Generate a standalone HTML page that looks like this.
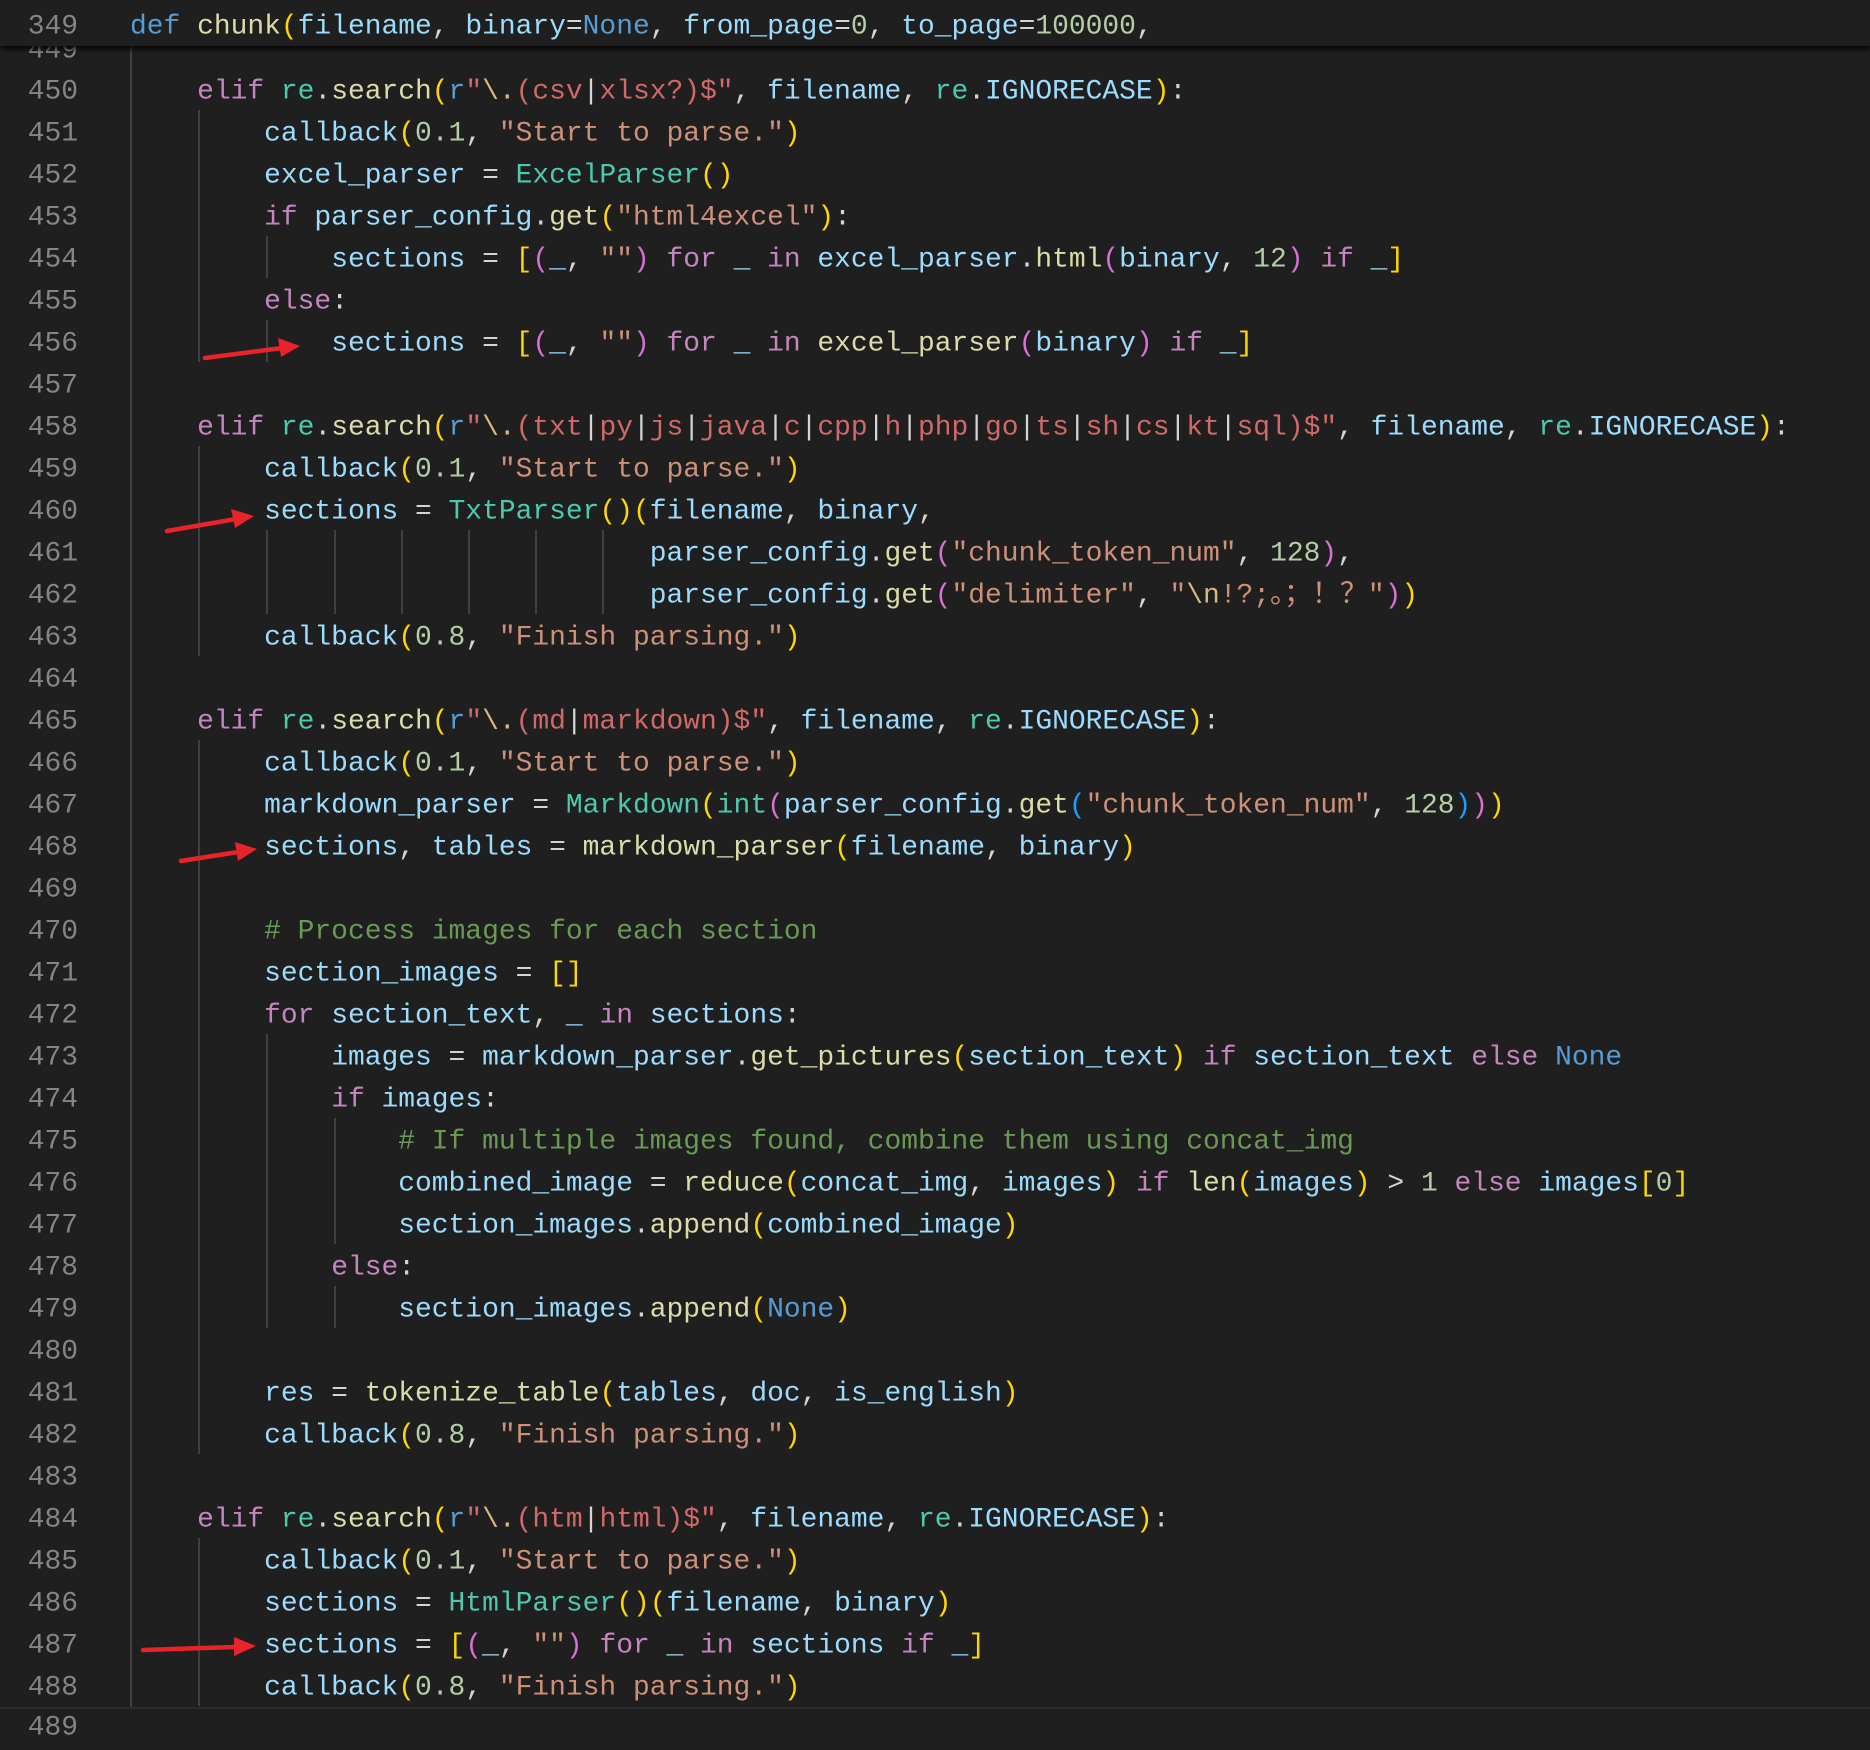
<!DOCTYPE html>
<html><head><meta charset="utf-8"><style>
html,body{margin:0;padding:0;}
body{width:1870px;height:1720px;background:#1f1f1f;position:relative;overflow:hidden;font-family:"Liberation Mono","Noto Sans CJK SC",monospace;font-size:27.95px;}
.l{position:absolute;left:130px;height:42px;line-height:42px;white-space:pre;color:#d4d4d4;transform:translateY(3.5px);}
.n{position:absolute;left:0;width:78px;text-align:right;height:42px;line-height:42px;color:#858585;transform:translateY(3.5px);}
.g{position:absolute;width:2px;background:#404040;height:42px;}
.k{color:#c586c0}.d{color:#569cd6}.f{color:#dcdcaa}.v{color:#9cdcfe}.s{color:#ce9178}.rx{color:#d16969}
.nu{color:#b5cea8}.c{color:#4ec9b0}.y{color:#ffd700}.p{color:#da70d6}.b{color:#179fff}.cm{color:#6a9955}
.e{color:#d7ba7d}.cn{color:#9cdcfe}.w{color:#d4d4d4}
#hdr{position:absolute;left:0;top:0;width:1870px;height:46px;background:#1f1f1f;box-shadow:0 3px 5px rgba(0,0,0,0.85);z-index:5;}
</style></head><body>
<div style="position:absolute;left:130px;top:40px;width:2px;height:1668px;background:#404040"></div>
<div style="position:absolute;left:0;top:1707px;width:1870px;height:2px;background:#2b2b2b"></div>
<div class="n" style="top:1704px">489</div>

<div class="n" style="top:27px">449</div>

<div class="g" style="left:198px;top:110px;height:252px"></div>
<div class="g" style="left:198px;top:446px;height:210px"></div>
<div class="g" style="left:198px;top:740px;height:714px"></div>
<div class="g" style="left:198px;top:1538px;height:168px"></div>
<div class="g" style="left:266px;top:236px;height:42px"></div>
<div class="g" style="left:266px;top:320px;height:42px"></div>
<div class="g" style="left:266px;top:530px;height:84px"></div>
<div class="g" style="left:266px;top:1034px;height:294px"></div>
<div class="g" style="left:334px;top:530px;height:84px"></div>
<div class="g" style="left:334px;top:1118px;height:126px"></div>
<div class="g" style="left:334px;top:1286px;height:42px"></div>
<div class="g" style="left:401px;top:530px;height:84px"></div>
<div class="g" style="left:468px;top:530px;height:84px"></div>
<div class="g" style="left:535px;top:530px;height:84px"></div>
<div class="g" style="left:602px;top:530px;height:84px"></div>

<div id="hdr">
<div class="n" style="top:3px">349</div>
<div class="l" style="top:3px"><span class="d">def</span> <span class="f">chunk</span><span class="y">(</span><span class="v">filename</span>, <span class="v">binary</span>=<span class="d">None</span>, <span class="v">from_page</span>=<span class="nu">0</span>, <span class="v">to_page</span>=<span class="nu">100000</span>,</div>
</div>

<div class="n" style="top:68px">450</div><div class="l" style="top:68px">    <span class="k">elif</span> <span class="c">re</span>.<span class="f">search</span><span class="y">(</span><span class="d">r</span><span class="rx">"</span><span class="e">\.</span><span class="rx">(csv</span><span class="w">|</span><span class="rx">xlsx?)$"</span>, <span class="v">filename</span>, <span class="c">re</span>.<span class="cn">IGNORECASE</span><span class="y">)</span>:</div>
<div class="n" style="top:110px">451</div><div class="l" style="top:110px">        <span class="v">callback</span><span class="y">(</span><span class="nu">0.1</span>, <span class="s">"Start to parse."</span><span class="y">)</span></div>
<div class="n" style="top:152px">452</div><div class="l" style="top:152px">        <span class="v">excel_parser</span> = <span class="c">ExcelParser</span><span class="y">()</span></div>
<div class="n" style="top:194px">453</div><div class="l" style="top:194px">        <span class="k">if</span> <span class="v">parser_config</span>.<span class="f">get</span><span class="y">(</span><span class="s">"html4excel"</span><span class="y">)</span>:</div>
<div class="n" style="top:236px">454</div><div class="l" style="top:236px">            <span class="v">sections</span> = <span class="y">[</span><span class="p">(</span><span class="v">_</span>, <span class="s">""</span><span class="p">)</span> <span class="k">for</span> <span class="v">_</span> <span class="k">in</span> <span class="v">excel_parser</span>.<span class="f">html</span><span class="p">(</span><span class="v">binary</span>, <span class="nu">12</span><span class="p">)</span> <span class="k">if</span> <span class="v">_</span><span class="y">]</span></div>
<div class="n" style="top:278px">455</div><div class="l" style="top:278px">        <span class="k">else</span>:</div>
<div class="n" style="top:320px">456</div><div class="l" style="top:320px">            <span class="v">sections</span> = <span class="y">[</span><span class="p">(</span><span class="v">_</span>, <span class="s">""</span><span class="p">)</span> <span class="k">for</span> <span class="v">_</span> <span class="k">in</span> <span class="f">excel_parser</span><span class="p">(</span><span class="v">binary</span><span class="p">)</span> <span class="k">if</span> <span class="v">_</span><span class="y">]</span></div>
<div class="n" style="top:362px">457</div>
<div class="n" style="top:404px">458</div><div class="l" style="top:404px">    <span class="k">elif</span> <span class="c">re</span>.<span class="f">search</span><span class="y">(</span><span class="d">r</span><span class="rx">"</span><span class="e">\.</span><span class="rx">(txt</span><span class="w">|</span><span class="rx">py</span><span class="w">|</span><span class="rx">js</span><span class="w">|</span><span class="rx">java</span><span class="w">|</span><span class="rx">c</span><span class="w">|</span><span class="rx">cpp</span><span class="w">|</span><span class="rx">h</span><span class="w">|</span><span class="rx">php</span><span class="w">|</span><span class="rx">go</span><span class="w">|</span><span class="rx">ts</span><span class="w">|</span><span class="rx">sh</span><span class="w">|</span><span class="rx">cs</span><span class="w">|</span><span class="rx">kt</span><span class="w">|</span><span class="rx">sql)$"</span>, <span class="v">filename</span>, <span class="c">re</span>.<span class="cn">IGNORECASE</span><span class="y">)</span>:</div>
<div class="n" style="top:446px">459</div><div class="l" style="top:446px">        <span class="v">callback</span><span class="y">(</span><span class="nu">0.1</span>, <span class="s">"Start to parse."</span><span class="y">)</span></div>
<div class="n" style="top:488px">460</div><div class="l" style="top:488px">        <span class="v">sections</span> = <span class="c">TxtParser</span><span class="y">()</span><span class="y">(</span><span class="v">filename</span>, <span class="v">binary</span>,</div>
<div class="n" style="top:530px">461</div><div class="l" style="top:530px">                               <span class="v">parser_config</span>.<span class="f">get</span><span class="p">(</span><span class="s">"chunk_token_num"</span>, <span class="nu">128</span><span class="p">)</span>,</div>
<div class="n" style="top:572px">462</div><div class="l" style="top:572px">                               <span class="v">parser_config</span>.<span class="f">get</span><span class="p">(</span><span class="s">"delimiter"</span>, <span class="s">"<span class="e">\n</span>!?;。；！？"</span><span class="p">)</span><span class="y">)</span></div>
<div class="n" style="top:614px">463</div><div class="l" style="top:614px">        <span class="v">callback</span><span class="y">(</span><span class="nu">0.8</span>, <span class="s">"Finish parsing."</span><span class="y">)</span></div>
<div class="n" style="top:656px">464</div>
<div class="n" style="top:698px">465</div><div class="l" style="top:698px">    <span class="k">elif</span> <span class="c">re</span>.<span class="f">search</span><span class="y">(</span><span class="d">r</span><span class="rx">"</span><span class="e">\.</span><span class="rx">(md</span><span class="w">|</span><span class="rx">markdown)$"</span>, <span class="v">filename</span>, <span class="c">re</span>.<span class="cn">IGNORECASE</span><span class="y">)</span>:</div>
<div class="n" style="top:740px">466</div><div class="l" style="top:740px">        <span class="v">callback</span><span class="y">(</span><span class="nu">0.1</span>, <span class="s">"Start to parse."</span><span class="y">)</span></div>
<div class="n" style="top:782px">467</div><div class="l" style="top:782px">        <span class="v">markdown_parser</span> = <span class="c">Markdown</span><span class="y">(</span><span class="c">int</span><span class="p">(</span><span class="v">parser_config</span>.<span class="f">get</span><span class="b">(</span><span class="s">"chunk_token_num"</span>, <span class="nu">128</span><span class="b">)</span><span class="p">)</span><span class="y">)</span></div>
<div class="n" style="top:824px">468</div><div class="l" style="top:824px">        <span class="v">sections</span>, <span class="v">tables</span> = <span class="f">markdown_parser</span><span class="y">(</span><span class="v">filename</span>, <span class="v">binary</span><span class="y">)</span></div>
<div class="n" style="top:866px">469</div>
<div class="n" style="top:908px">470</div><div class="l" style="top:908px">        <span class="cm"># Process images for each section</span></div>
<div class="n" style="top:950px">471</div><div class="l" style="top:950px">        <span class="v">section_images</span> = <span class="y">[]</span></div>
<div class="n" style="top:992px">472</div><div class="l" style="top:992px">        <span class="k">for</span> <span class="v">section_text</span>, <span class="v">_</span> <span class="k">in</span> <span class="v">sections</span>:</div>
<div class="n" style="top:1034px">473</div><div class="l" style="top:1034px">            <span class="v">images</span> = <span class="v">markdown_parser</span>.<span class="f">get_pictures</span><span class="y">(</span><span class="v">section_text</span><span class="y">)</span> <span class="k">if</span> <span class="v">section_text</span> <span class="k">else</span> <span class="d">None</span></div>
<div class="n" style="top:1076px">474</div><div class="l" style="top:1076px">            <span class="k">if</span> <span class="v">images</span>:</div>
<div class="n" style="top:1118px">475</div><div class="l" style="top:1118px">                <span class="cm"># If multiple images found, combine them using concat_img</span></div>
<div class="n" style="top:1160px">476</div><div class="l" style="top:1160px">                <span class="v">combined_image</span> = <span class="f">reduce</span><span class="y">(</span><span class="v">concat_img</span>, <span class="v">images</span><span class="y">)</span> <span class="k">if</span> <span class="f">len</span><span class="y">(</span><span class="v">images</span><span class="y">)</span> &gt; <span class="nu">1</span> <span class="k">else</span> <span class="v">images</span><span class="y">[</span><span class="nu">0</span><span class="y">]</span></div>
<div class="n" style="top:1202px">477</div><div class="l" style="top:1202px">                <span class="v">section_images</span>.<span class="f">append</span><span class="y">(</span><span class="v">combined_image</span><span class="y">)</span></div>
<div class="n" style="top:1244px">478</div><div class="l" style="top:1244px">            <span class="k">else</span>:</div>
<div class="n" style="top:1286px">479</div><div class="l" style="top:1286px">                <span class="v">section_images</span>.<span class="f">append</span><span class="y">(</span><span class="d">None</span><span class="y">)</span></div>
<div class="n" style="top:1328px">480</div>
<div class="n" style="top:1370px">481</div><div class="l" style="top:1370px">        <span class="v">res</span> = <span class="f">tokenize_table</span><span class="y">(</span><span class="v">tables</span>, <span class="v">doc</span>, <span class="v">is_english</span><span class="y">)</span></div>
<div class="n" style="top:1412px">482</div><div class="l" style="top:1412px">        <span class="v">callback</span><span class="y">(</span><span class="nu">0.8</span>, <span class="s">"Finish parsing."</span><span class="y">)</span></div>
<div class="n" style="top:1454px">483</div>
<div class="n" style="top:1496px">484</div><div class="l" style="top:1496px">    <span class="k">elif</span> <span class="c">re</span>.<span class="f">search</span><span class="y">(</span><span class="d">r</span><span class="rx">"</span><span class="e">\.</span><span class="rx">(htm</span><span class="w">|</span><span class="rx">html)$"</span>, <span class="v">filename</span>, <span class="c">re</span>.<span class="cn">IGNORECASE</span><span class="y">)</span>:</div>
<div class="n" style="top:1538px">485</div><div class="l" style="top:1538px">        <span class="v">callback</span><span class="y">(</span><span class="nu">0.1</span>, <span class="s">"Start to parse."</span><span class="y">)</span></div>
<div class="n" style="top:1580px">486</div><div class="l" style="top:1580px">        <span class="v">sections</span> = <span class="c">HtmlParser</span><span class="y">()</span><span class="y">(</span><span class="v">filename</span>, <span class="v">binary</span><span class="y">)</span></div>
<div class="n" style="top:1622px">487</div><div class="l" style="top:1622px">        <span class="v">sections</span> = <span class="y">[</span><span class="p">(</span><span class="v">_</span>, <span class="s">""</span><span class="p">)</span> <span class="k">for</span> <span class="v">_</span> <span class="k">in</span> <span class="v">sections</span> <span class="k">if</span> <span class="v">_</span><span class="y">]</span></div>
<div class="n" style="top:1664px">488</div><div class="l" style="top:1664px">        <span class="v">callback</span><span class="y">(</span><span class="nu">0.8</span>, <span class="s">"Finish parsing."</span><span class="y">)</span></div>

<svg style="position:absolute;left:0;top:0;z-index:6" width="1870" height="1720">
<g stroke="#e8232a" stroke-width="4.5" stroke-linecap="round" fill="#e8232a">
<line x1="205" y1="358" x2="282" y2="348"/>
<line x1="167" y1="531" x2="236" y2="519"/>
<line x1="181" y1="861" x2="238" y2="852"/>
<line x1="143" y1="1650" x2="235" y2="1647"/>
</g>
<g fill="#e8232a">
<polygon points="300,346 278,338 281,357"/>
<polygon points="254,516 231,509 235,528"/>
<polygon points="257,849 235,842 238,861"/>
<polygon points="256,1646 234,1637 234,1656"/>
</g>
</svg>
</body></html>
